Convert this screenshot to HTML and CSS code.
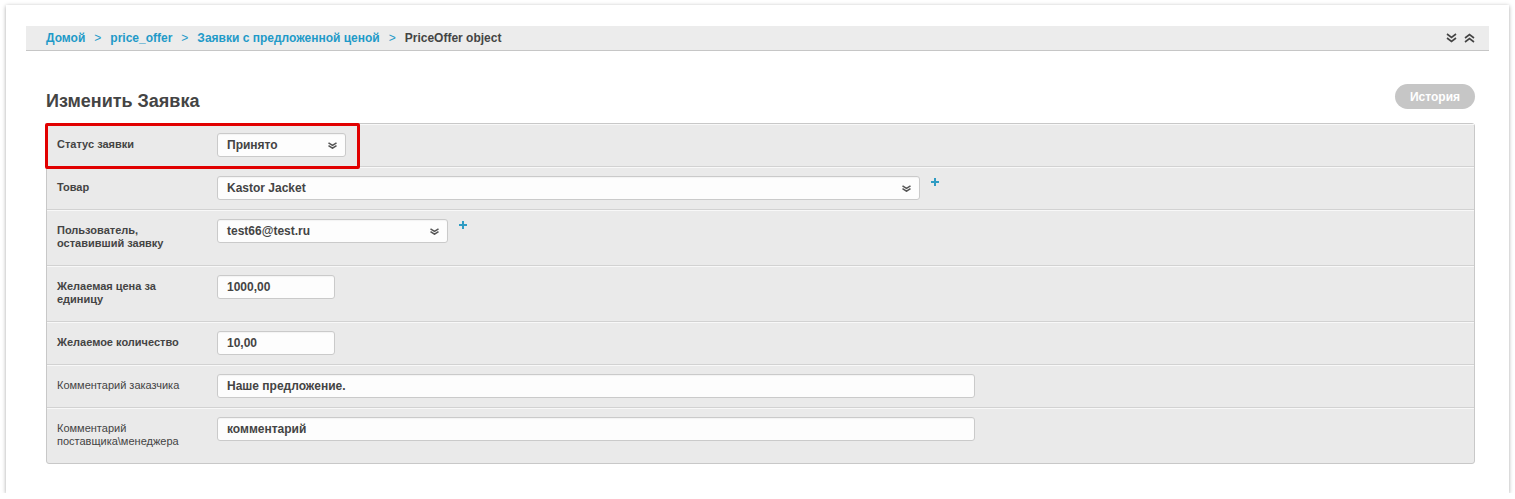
FILE: index.html
```html
<!DOCTYPE html>
<html lang="ru">
<head>
<meta charset="utf-8">
<title>Изменить Заявка</title>
<link rel="stylesheet" href="styles.css">
</head>
<body>
<div class="card">
  <div class="crumbs">
    <nav class="crumb-list">
      <a class="crumb">Домой</a><span class="sep">&gt;</span>
      <a class="crumb">price_offer</a><span class="sep">&gt;</span>
      <a class="crumb">Заявки с предложенной ценой</a><span class="sep">&gt;</span>
      <span class="crumb current">PriceOffer object</span>
    </nav>
    <div class="tools">
      <svg class="tool" width="11" height="10" viewBox="0 0 11 10"><path d="M1 1 L5.5 4.5 L10 1 M1 5 L5.5 8.5 L10 5" fill="none" stroke="#444" stroke-width="1.6"/></svg>
      <svg class="tool" width="11" height="10" viewBox="0 0 11 10"><path d="M1 5 L5.5 1.5 L10 5 M1 9 L5.5 5.5 L10 9" fill="none" stroke="#444" stroke-width="1.6"/></svg>
    </div>
  </div>

  <main class="content">
    <div class="head">
      <h1 class="title">Изменить Заявка</h1>
      <a class="history">История</a>
    </div>

    <div class="panel">
      <div class="highlight"></div>

      <div class="row">
        <label class="label req">Статус заявки</label>
        <div class="field select w-status"><span>Принято</span><svg class="arrow" width="9" height="7" viewBox="0 0 9 7"><path d="M0.5 0.8 L4.5 3.4 L8.5 0.8 M0.5 3.6 L4.5 6.2 L8.5 3.6" fill="none" stroke="#555" stroke-width="1.5"/></svg></div>
      </div>

      <div class="row">
        <label class="label req">Товар</label>
        <div class="field select w-goods"><span>Kastor Jacket</span><svg class="arrow" width="9" height="7" viewBox="0 0 9 7"><path d="M0.5 0.8 L4.5 3.4 L8.5 0.8 M0.5 3.6 L4.5 6.2 L8.5 3.6" fill="none" stroke="#555" stroke-width="1.5"/></svg></div>
        <svg class="plus" width="8" height="8" viewBox="0 0 8 8"><path d="M4 0 V8 M0 4 H8" stroke="#2f9cc3" stroke-width="2"/></svg>
      </div>

      <div class="row">
        <label class="label req">Пользователь, оставивший заявку</label>
        <div class="field select w-user"><span>test66@test.ru</span><svg class="arrow" width="9" height="7" viewBox="0 0 9 7"><path d="M0.5 0.8 L4.5 3.4 L8.5 0.8 M0.5 3.6 L4.5 6.2 L8.5 3.6" fill="none" stroke="#555" stroke-width="1.5"/></svg></div>
        <svg class="plus" width="8" height="8" viewBox="0 0 8 8"><path d="M4 0 V8 M0 4 H8" stroke="#2f9cc3" stroke-width="2"/></svg>
      </div>

      <div class="row">
        <label class="label req">Желаемая цена за единицу</label>
        <div class="field w-num"><span>1000,00</span></div>
      </div>

      <div class="row">
        <label class="label req">Желаемое количество</label>
        <div class="field w-num"><span>10,00</span></div>
      </div>

      <div class="row">
        <label class="label">Комментарий заказчика</label>
        <div class="field w-text"><span>Наше предложение.</span></div>
      </div>

      <div class="row last">
        <label class="label">Комментарий поставщика\менеджера</label>
        <div class="field w-text"><span>комментарий</span></div>
      </div>
    </div>
  </main>
</div>
</body>
</html>
```

FILE: styles.css
```css
html, body {
  margin: 0;
  padding: 0;
  background: #ffffff;
}

body {
  font-family: "Liberation Sans", Arial, sans-serif;
  color: #444;
}

.card {
  margin: 5px 6px 0 6px;
  width: 1503px;
  height: 488px;
  box-sizing: border-box;
  padding: 21px 20px 0 20px;
  background: #fff;
  box-shadow: 0 1px 4px rgba(0, 0, 0, 0.35);
}

/* breadcrumbs */
.crumbs {
  display: flex;
  align-items: center;
  justify-content: space-between;
  height: 25px;
  box-sizing: border-box;
  padding: 0 14px 0 20px;
  background: #ececec;
  border-bottom: 1px solid #c6c6c6;
}

.crumb-list {
  display: flex;
  align-items: center;
  font-size: 12px;
  font-weight: bold;
  line-height: 14px;
}

.crumb {
  color: #1f9ac8;
  text-decoration: none;
}

.crumb.current {
  color: #444;
}

.sep {
  color: #1f9ac8;
  font-weight: normal;
  margin: 0 9px 0 9px;
}

.tools {
  display: flex;
  gap: 7px;
  align-items: center;
}

.tool {
  display: block;
}

/* content */
.content {
  padding: 0 14px 0 20px;
}

.head {
  display: flex;
  justify-content: space-between;
  align-items: flex-start;
  height: 39px;
  margin-top: 33px;
}

.title {
  margin: 0;
  padding-top: 6px;
  font-size: 18px;
  line-height: 22px;
  font-weight: bold;
  color: #444;
}

.history {
  display: flex;
  align-items: center;
  justify-content: center;
  width: 80px;
  height: 25px;
  border-radius: 13px;
  background: #c6c6c6;
  color: #fff;
  font-size: 12px;
  font-weight: bold;
}

/* panel */
.panel {
  position: relative;
  background: #eaeaea;
  border: 1px solid #c8c8c8;
  border-radius: 3px;
}

.row {
  display: flex;
  align-items: flex-start;
  padding: 8px 10px 9px 10px;
  border-top: 1px solid #f8f8f8;
  border-bottom: 1px solid #d2d2d2;
}

.row.last {
  border-bottom: none;
}

.label {
  flex: none;
  width: 160px;
  box-sizing: border-box;
  padding: 5px 20px 6px 0;
  font-size: 11px;
  line-height: 13px;
  font-weight: normal;
  color: #444;
}

.label.req {
  font-weight: bold;
}

.field {
  display: flex;
  align-items: center;
  justify-content: space-between;
  height: 24px;
  box-sizing: border-box;
  padding: 0 8px 0 9px;
  background: #fdfdfd;
  border: 1px solid #cacaca;
  border-radius: 3px;
  box-shadow: inset 0 1px 1px rgba(0, 0, 0, 0.04);
  font-size: 12px;
  font-weight: bold;
  color: #444;
}

.arrow {
  display: block;
  flex: none;
}

.plus {
  display: block;
  flex: none;
  margin: 2px 0 0 11px;
}

.w-status { width: 129px; }
.w-goods { width: 703px; }
.w-user { width: 231px; }
.w-num { width: 118px; }
.w-text { width: 758px; }

/* annotation overlay */
.highlight {
  position: absolute;
  left: -2px;
  top: -1px;
  width: 315px;
  height: 46px;
  box-sizing: border-box;
  border: 3px solid #e10000;
  border-radius: 2px;
  pointer-events: none;
  z-index: 2;
}
```
